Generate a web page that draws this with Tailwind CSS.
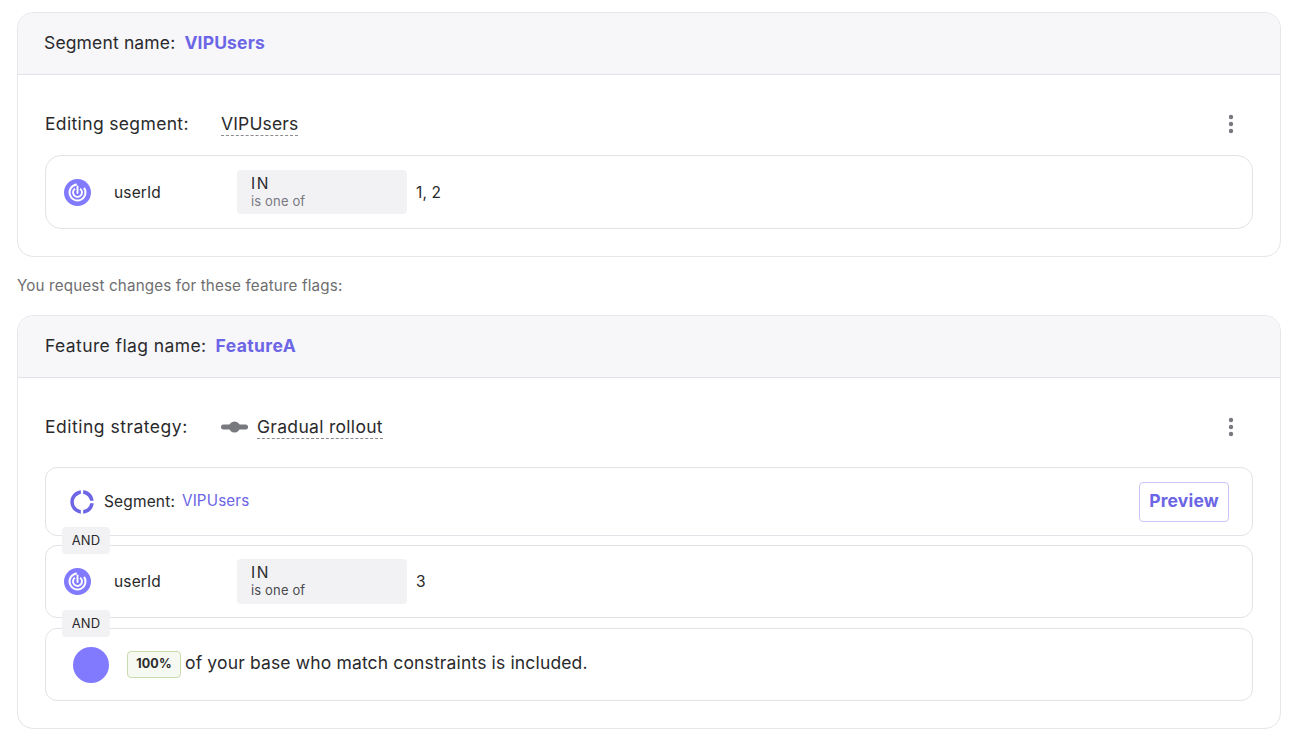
<!DOCTYPE html>
<html lang="en">
<head>
    <meta charset="UTF-8">
    <title>Change request</title>
    <script src="https://cdn.jsdelivr.net/npm/@tailwindcss/browser@4"></script>
</head>
<body class="bg-white text-[#2a2a2c] font-['Inter',sans-serif] text-[17.5px] tracking-[0.15px] overflow-hidden">
<div class="w-[1300px] h-[742px] overflow-hidden px-[17px] pt-[12px]">

    <!-- segment card -->
    <section class="w-[1264px] h-[245px] border border-[#e6e6eb] rounded-[16px] overflow-hidden">
        <header class="h-[62px] bg-[#f7f7fa] border-b border-[#e2e2e8] flex items-center pl-[26px]">
            <span>Segment name:</span>
            <span class="ml-[9px] font-bold text-[#6c65e5]">VIPUsers</span>
        </header>
        <div class="px-[27px]">
            <div class="h-[80px] pt-[18px] flex items-center justify-between">
                <div class="flex items-center">
                    <span class="w-[176px] tracking-[0.35px]">Editing segment:</span>
                    <span class="border-b border-dashed border-[#8a8a90] leading-[22px]">VIPUsers</span>
                </div>
                <svg class="w-[24px] h-[24px] mr-[10px] text-[#78787f]" viewBox="0 0 24 24" fill="currentColor"><circle cx="12" cy="5" r="2.2"/><circle cx="12" cy="12" r="2.2"/><circle cx="12" cy="19" r="2.2"/></svg>
            </div>
            <div class="h-[74px] border border-[#e2e2e8] rounded-[16px] flex items-center pl-[18px]">
                <svg class="w-[27px] h-[27px]" viewBox="0 0 27 27" fill="none" stroke="#fff" stroke-width="1.9"><circle cx="13.5" cy="13.5" r="13.5" fill="#817afe" stroke="none"/><path d="M17.5 6.57A8 8 0 1 1 9.5 6.57" transform="rotate(25 13.5 13.5)"/><path d="M16.08 9.81A4.5 4.5 0 1 1 10.92 9.81"/><path d="M13.5 7.5V14" stroke-linecap="round"/></svg>
                <span class="ml-[23px] w-[123px] text-[15.5px] mt-[1px]">userId</span>
                <div class="w-[170px] h-[44px] bg-[#f2f2f5] rounded-[4px] pl-[14px] flex flex-col justify-center">
                    <span class="text-[15.5px] leading-[18px] tracking-[1.5px]">IN</span>
                    <span class="text-[13px] leading-[17px] text-[#78787f]">is one of</span>
                </div>
                <span class="ml-[9px] text-[15.5px] mt-[1px]">1, 2</span>
            </div>
        </div>
    </section>

    <p class="mt-[19px] h-[39px] text-[15.2px] leading-[20px] text-[#6e6e70]">You request changes for these feature flags:</p>

    <!-- feature flag card -->
    <section class="w-[1264px] h-[414px] border border-[#e6e6eb] rounded-[16px] overflow-hidden">
        <header class="h-[62px] bg-[#f7f7fa] border-b border-[#e2e2e8] flex items-center pl-[27px]">
            <span class="tracking-[0.4px]">Feature flag name:</span>
            <span class="ml-[9px] font-bold text-[#6c65e5] tracking-[0.4px]">FeatureA</span>
        </header>
        <div class="px-[27px]">
            <div class="h-[89px] pt-[9px] flex items-center justify-between">
                <div class="flex items-center">
                    <span class="w-[176px] tracking-[0.5px]">Editing strategy:</span>
                    <svg class="w-[27px] h-[14px] mr-[9px] text-[#78787f]" viewBox="0 0 27 14" fill="currentColor"><rect x="0" y="4.5" width="27" height="5" rx="2.5"/><circle cx="13.5" cy="7" r="5.5"/></svg>
                    <span class="border-b border-dashed border-[#8a8a90] leading-[22px] tracking-[0.3px]">Gradual rollout</span>
                </div>
                <svg class="w-[24px] h-[24px] mr-[10px] text-[#78787f]" viewBox="0 0 24 24" fill="currentColor"><circle cx="12" cy="5" r="2.2"/><circle cx="12" cy="12" r="2.2"/><circle cx="12" cy="19" r="2.2"/></svg>
            </div>

            <div class="h-[69px] border border-[#e2e2e8] rounded-[12px] flex items-center pl-[22px] pr-[23px]">
                <svg class="w-[28px] h-[28px]" viewBox="0 0 24 24" fill="#6c65e5"><path d="M11 5.08V2c-5 .5-9 4.81-9 10s4 9.5 9 10v-3.08c-3-.48-6-3.19-6-6.92s3-6.44 6-6.92zM18.97 11H22c-.47-5-4-8.53-9-9v3.08C16 5.51 18.54 8 18.97 11zM13 18.92V22c5-.47 8.53-4 9-9h-3.03c-.43 3-2.97 5.49-5.97 5.92z"/></svg>
                <span class="ml-[8px] text-[15.5px]">Segment:</span>
                <span class="ml-[7px] text-[15.2px] text-[#6c65e5]">VIPUsers</span>
                <button class="ml-auto w-[90px] h-[40px] border border-[#c9c6f7] rounded-[4px] font-bold text-[#6c65e5]">Preview</button>
            </div>

            <div class="relative mt-[9px] h-[73px] border border-[#e2e2e8] rounded-[12px] flex items-center pl-[18px]">
                <span class="absolute left-[16px] top-[-19px] w-[48px] h-[27px] bg-[#f2f2f5] rounded-[4px] flex items-center justify-center text-[13px]">AND</span>
                <svg class="w-[27px] h-[27px]" viewBox="0 0 27 27" fill="none" stroke="#fff" stroke-width="1.9"><circle cx="13.5" cy="13.5" r="13.5" fill="#817afe" stroke="none"/><path d="M17.5 6.57A8 8 0 1 1 9.5 6.57" transform="rotate(25 13.5 13.5)"/><path d="M16.08 9.81A4.5 4.5 0 1 1 10.92 9.81"/><path d="M13.5 7.5V14" stroke-linecap="round"/></svg>
                <span class="ml-[23px] w-[123px] text-[15.5px]">userId</span>
                <div class="w-[170px] h-[45px] bg-[#f2f2f5] rounded-[4px] pl-[14px] flex flex-col justify-center">
                    <span class="text-[15.5px] leading-[18px] tracking-[1.5px]">IN</span>
                    <span class="text-[13px] leading-[17px] text-[#4a4a4e]">is one of</span>
                </div>
                <span class="ml-[9px] text-[15.5px]">3</span>
            </div>

            <div class="relative mt-[10px] h-[73px] border border-[#e2e2e8] rounded-[12px] flex items-center pl-[27px]">
                <span class="absolute left-[16px] top-[-19px] w-[48px] h-[27px] bg-[#f2f2f5] rounded-[4px] flex items-center justify-center text-[13px]">AND</span>
                <span class="w-[36px] h-[36px] rounded-full bg-[#817afe]"></span>
                <span class="ml-[18px] w-[54px] h-[27px] border border-[#c8dcae] bg-[#f6f8f2] rounded-[4px] flex items-center justify-center text-[12.5px] font-bold">100%</span>
                <span class="ml-[4px] -mt-[2px]">of your base who match constraints is included.</span>
            </div>
        </div>
    </section>
</div>
</body>
</html>
